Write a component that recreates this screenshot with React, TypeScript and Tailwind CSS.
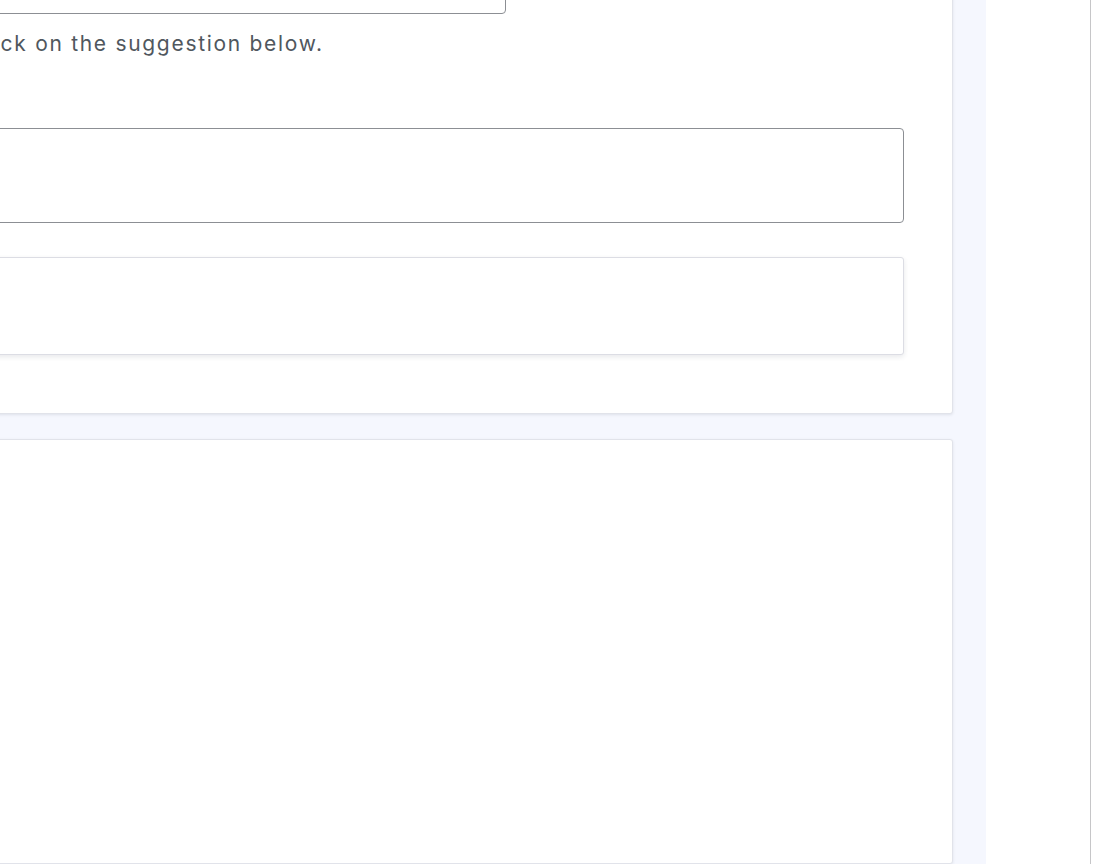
export default function App() {
  return (
    <div className="flex h-[864px] w-[1100px] overflow-hidden bg-white font-['Inter','Noto_Sans',sans-serif]">
      <main className="flex w-[986px] shrink-0 flex-col gap-[25px] overflow-hidden bg-[#f5f7fe] pr-[33px]">
        <section className="-ml-[79px] -mt-[80px] rounded-[3px] border border-[#e1e3ea] bg-white px-[48px] pb-[58px] pt-[48px] shadow-[0_1px_3px_rgba(30,35,60,0.1)]">
          <input
            type="text"
            aria-label="Address"
            className="block h-[45px] w-[536px] rounded-[4px] border border-[#8c8f94] bg-white px-3 text-[20px] text-[#2c3338]"
          />
          <p className="mt-[16px] whitespace-nowrap text-[21px] leading-[28px] tracking-[1.7px] text-[#50575e]">
            Click on the suggestion below.
          </p>
          <input
            type="text"
            aria-label="Suggestion"
            className="mt-[70px] block h-[95px] w-full rounded-[4px] border border-[#8c8f94] bg-white px-3 text-[20px] text-[#2c3338]"
          />
          <div className="mt-[34px] h-[98px] rounded-[3px] border border-[#dcdde4] bg-white shadow-[0_2px_5px_rgba(30,35,60,0.1)]" />
        </section>
        <section className="-ml-[79px] flex-1 rounded-[3px] border border-[#e1e3ea] bg-white shadow-[0_1px_3px_rgba(30,35,60,0.1)]" />
      </main>
      <aside className="w-[105px] shrink-0 border-r-[1.5px] border-[#c6c6c8] bg-white" />
    </div>
  );
}
